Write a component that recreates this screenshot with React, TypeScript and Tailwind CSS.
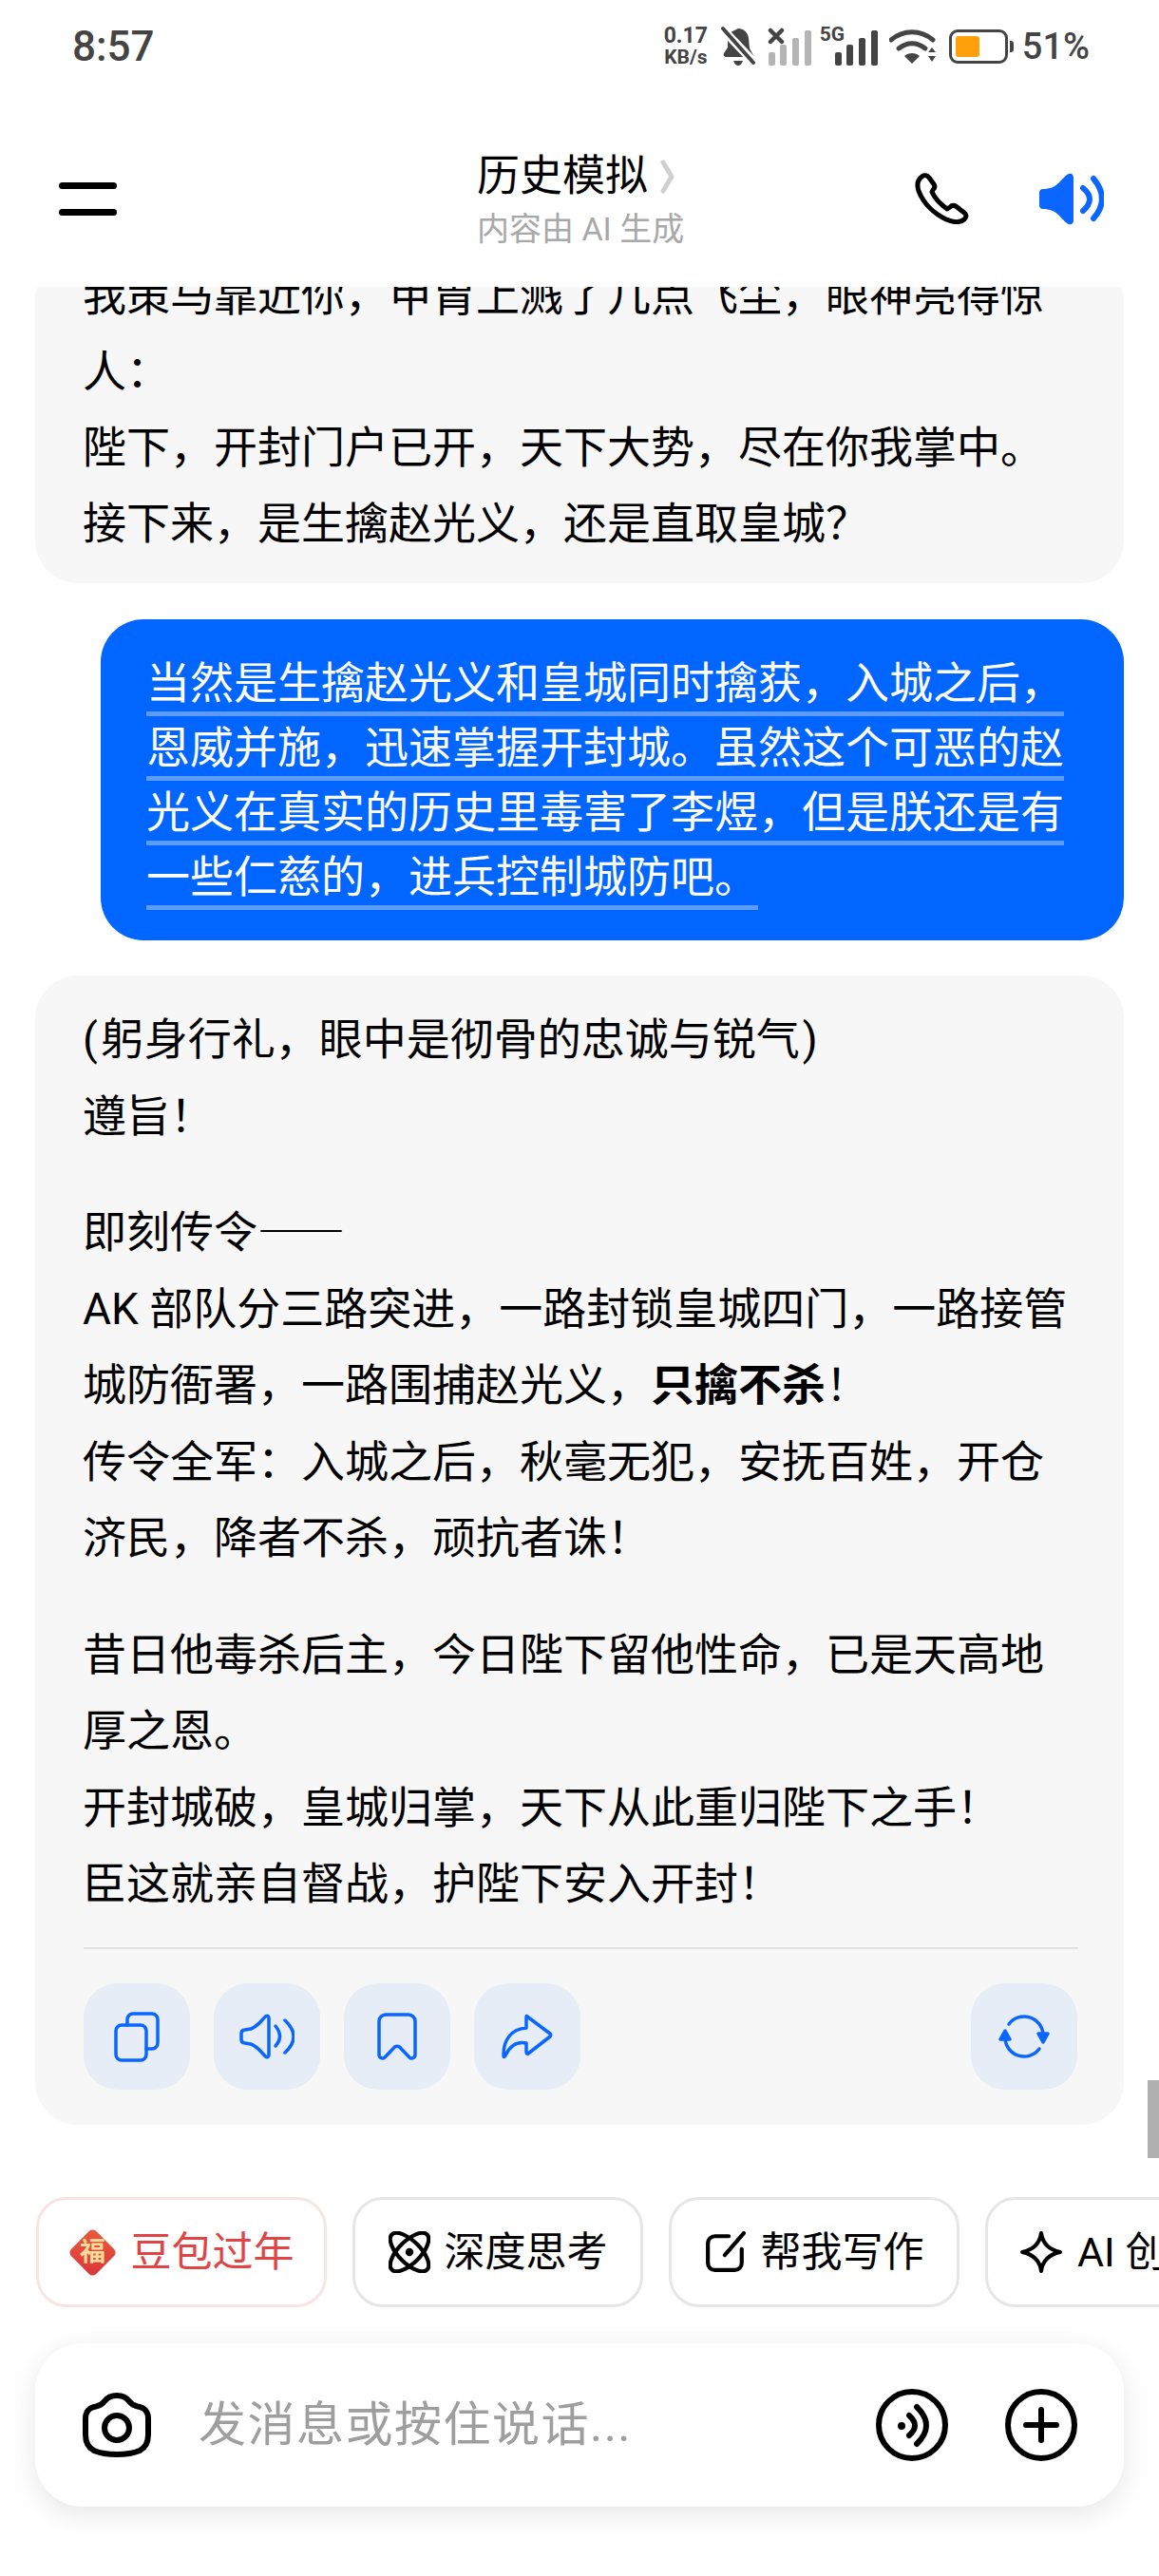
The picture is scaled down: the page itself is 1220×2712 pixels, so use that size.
import type { ReactNode } from 'react';

const answer = [
  ['@paren躬身行礼，眼中是彻骨的忠诚与锐气', '遵旨！'],
  ['即刻传令@dash', 'AK 部队分三路突进，一路封锁皇城四门，一路接管城防衙署，一路围捕赵光义，@bold', '传令全军：入城之后，秋毫无犯，安抚百姓，开仓济民，降者不杀，顽抗者诛！'],
  ['昔日他毒杀后主，今日陛下留他性命，已是天高地厚之恩。', '开封城破，皇城归掌，天下从此重归陛下之手！', '臣这就亲自督战，护陛下安入开封！'],
];

function Line({ text }: { text: string }) {
  if (text.startsWith('@paren')) {
    return (
      <p>
        <span className="mr-[3px]">(</span>
        {text.replace('@paren', '')}
        <span className="ml-[3px]">)</span>
      </p>
    );
  }
  if (text.endsWith('@bold')) {
    return (
      <p>
        {text.replace('@bold', '')}
        <b className="font-bold">只擒不杀</b>！
      </p>
    );
  }
  if (text.endsWith('@dash')) {
    return (
      <p>
        {text.replace('@dash', '')}
        <span lang="zh-CN" className="leading-none [font-family:'Noto_Sans_CJK_SC',sans-serif]">——</span>
      </p>
    );
  }
  return <p>{text}</p>;
}

function StatusBar() {
  return (
    <div className="flex h-[96px] shrink-0 items-center justify-between pl-[76px] pr-[73px] pt-[2px] text-[#444444]">
      <span className="text-[44px] font-medium leading-none">8:57</span>
      <div className="flex items-center">
        <div className="flex w-[48px] flex-col items-center font-bold">
          <span className="text-[23px] leading-[22px]">0.17</span>
          <span className="text-[21px] leading-[22px]">KB/s</span>
        </div>
        <svg className="ml-[12px]" width="38" height="44" viewBox="0 0 38 44" fill="#444444">
          <path d="M19 3c6 0 10 4 11 10l1 11 5 9H7c-3 0-4-2-3-4l4-6V14c0-3 1-5 3-7z" />
          <path d="M14 37h10c-1 3-3 5-5 5s-4-2-5-5z" />
          <path d="M2 3l34 36" stroke="#ffffff" strokeWidth="9" />
          <path d="M3 3l32 36" stroke="#444444" strokeWidth="4" strokeLinecap="round" />
        </svg>
        <svg className="ml-[12px]" width="47" height="40" viewBox="0 0 47 40">
          <path d="M3 3l12 12M15 3L3 15" stroke="#444444" strokeWidth="4.500" strokeLinecap="round" />
          <rect x="1" y="26" width="7" height="14" rx="2" fill="#b5b5b5" />
          <rect x="13" y="18" width="7" height="22" rx="2" fill="#b5b5b5" />
          <rect x="26" y="11" width="7" height="29" rx="2" fill="#b5b5b5" />
          <rect x="39" y="3" width="7" height="37" rx="2" fill="#b5b5b5" />
        </svg>
        <div className="relative ml-[8px] h-[40px] w-[62px]">
          <span className="absolute left-0 top-[-4px] text-[21px] font-bold leading-[22px]">5G</span>
          <svg className="absolute left-0 top-0" width="62" height="40" viewBox="0 0 62 40" fill="#444444">
            <rect x="16" y="26" width="7" height="14" rx="2" />
            <rect x="28" y="18" width="7" height="22" rx="2" />
            <rect x="41" y="11" width="7" height="29" rx="2" />
            <rect x="54" y="3" width="7" height="37" rx="2" />
          </svg>
        </div>
        <svg className="ml-[11px]" width="50" height="38" viewBox="0 0 50 38" fill="none">
          <path d="M2 12c13-11 31-11 44 0" stroke="#444444" strokeWidth="5" strokeLinecap="round" />
          <path d="M10 21c9-7 19-7 28 0" stroke="#444444" strokeWidth="5" strokeLinecap="round" />
          <path d="M16 29c4-4 12-4 16 0l-8 8z" fill="#444444" />
          <path d="M41 25l4-5 4 5zM41 29l4 6 4-6z" fill="#444444" />
        </svg>
        <div className="relative ml-[13px] h-[36px] w-[62px] rounded-[9px] border-[3px] border-[#444444]">
          <div className="absolute left-[4px] top-[4px] h-[22px] w-[25px] rounded-[3px] bg-[#ff9f0a]" />
          <div className="absolute right-[-9px] top-[9px] h-[12px] w-[4px] rounded-r-[3px] bg-[#444444]" />
        </div>
        <span className="ml-[15px] text-[38px] font-medium leading-none">51%</span>
      </div>
    </div>
  );
}

function Header() {
  return (
    <div className="flex h-[206px] shrink-0 items-start pl-[62px] pr-[58px]">
      <div className="mt-[96px] flex w-[61px] flex-col gap-[21px]">
        <div className="h-[7px] rounded-full bg-black" />
        <div className="h-[7px] rounded-full bg-black" />
      </div>
      <div className="ml-[379px] flex flex-col pt-[65px]">
        <div className="flex items-center text-[45px] leading-[50px] text-black">
          历史模拟
          <svg className="ml-[13px]" width="16" height="36" viewBox="0 0 16 36" fill="none">
            <path d="M3 3l9 15-9 15" stroke="#cfcfcf" strokeWidth="5" strokeLinecap="round" strokeLinejoin="round" />
          </svg>
        </div>
        <div className="mt-[10px] text-[34px] leading-[40px] text-[#a8a8a8]">内容由 AI 生成</div>
      </div>
      <svg className="ml-auto mt-[86px]" width="57" height="54" viewBox="0 0 57 54" fill="none">
        <path
          d="M8 3.500C10 2 13 2.500 15 5l5 7c1.500 2 1 4-1 6l-1 2c3 7 9 13 16 18l3-2c2-2 4-2 6-1l9 7c3 2 2 5 0 7-5 4-12 3-19 0C20 43 9 32 4 19 2 13 3 7 8 3.500z"
          stroke="#000000"
          strokeWidth="5"
          strokeLinejoin="round"
        />
      </svg>
      <svg className="ml-[74px] mt-[86px]" width="68" height="55" viewBox="0 0 68 55" fill="none">
        <path
          d="M31 1c3-1 5 1 5 4v45c0 3-2 5-5 4-3-1-6-5-10-9-5-5-10-7-17-7-3 0-4-2-4-4V21c0-2 1-4 4-4 7 0 12-2 17-7 4-4 7-8 10-9z"
          fill="#0a66ff"
        />
        <path d="M46 16Q60 27.500 46 40" stroke="#0a66ff" strokeWidth="6" strokeLinecap="round" />
        <path d="M57 6Q75 27.500 57 48" stroke="#0a66ff" strokeWidth="6" strokeLinecap="round" />
      </svg>
    </div>
  );
}

function ActionButton({ children, className }: { children: ReactNode; className?: string }) {
  return (
    <div className={`flex h-[112px] w-[112px] items-center justify-center rounded-[36px] bg-[#e6edf7] ${className ?? ''}`}>
      {children}
    </div>
  );
}

function Actions() {
  const line = { stroke: '#0a66ff', strokeWidth: 3.500, strokeLinecap: 'round', strokeLinejoin: 'round' } as const;
  return (
    <div className="mt-[36px] flex gap-[25px]">
      <ActionButton>
        <svg width="48" height="53" viewBox="0 0 48 53" fill="none">
          <rect x="2" y="14" width="32" height="37" rx="6" {...line} />
          <path d="M14 14V8a6 6 0 0 1 6-6h20a6 6 0 0 1 6 6v25a6 6 0 0 1-6 6h-6" {...line} />
        </svg>
      </ActionButton>
      <ActionButton>
        <svg width="58" height="48" viewBox="0 0 58 48" fill="none">
          <path d="M28 2.500c2-1 3 .5 3 2.500v38c0 2-1 3.500-3 2.500-4-3.500-8-10.500-16-13.500l-6-1c-3 0-4-2-4-4v-6c0-2 1-4 4-4l6-1c8-3 12-10 16-13.500z" {...line} />
          <path d="M38 13Q47 24 38 34" {...line} />
          <path d="M48 7Q66 24 48 41" {...line} />
        </svg>
      </ActionButton>
      <ActionButton>
        <svg width="42" height="50" viewBox="0 0 42 50" fill="none">
          <path d="M2 9a7 7 0 0 1 7-7h24a7 7 0 0 1 7 7v35c0 4-4 5-6 3L23.500 36c-1.500-1-3.500-1-5 0L8 47c-2 2-6 1-6-3z" {...line} />
        </svg>
      </ActionButton>
      <ActionButton>
        <svg width="54" height="48" viewBox="0 0 54 48" fill="none">
          <path d="M27 3l24 18c1 1 1 2 0 3L28 42c-1 1-2 0-2-2v-9c-10-2-17 2-22 13-2 3-2 1-2-1 0-15 8-27 24-28V5c0-2 0-3 1-2z" {...line} />
        </svg>
      </ActionButton>
      <ActionButton className="ml-auto">
        <svg width="57" height="48" viewBox="0 0 57 48" fill="none">
          <path d="M12 11A20 20 0 0 1 48 22" {...line} />
          <path d="M43 21h10l-5 9z" fill="#0a66ff" {...line} />
          <path d="M44 37A20 20 0 0 1 8 26" {...line} />
          <path d="M3 27h10l-5-9z" fill="#0a66ff" {...line} />
        </svg>
      </ActionButton>
    </div>
  );
}

function Chat() {
  return (
    <div className="relative h-[1988px] shrink-0 overflow-hidden">
      <div className="-mt-[31px] flex flex-col px-[37px]">
        <div className="rounded-[45px] bg-[#f7f7f7] pb-[23px] pl-[50px] pr-[50px] text-[46px] leading-[80px] text-black">
          <p>我策马靠近你，甲胄上溅了几点飞尘，眼神亮得惊人：</p>
          <p>陛下，开封门户已开，天下大势，尽在你我掌中。</p>
          <p>接下来，是生擒赵光义，还是直取皇城？</p>
        </div>
        <div className="ml-[69px] mt-[38px] rounded-[45px] bg-[#0066ff] py-[33px] pl-[48px] pr-[49px] text-[46px] leading-[68px] text-white">
          <span className="underline decoration-[#5c9bff] decoration-[5px] underline-offset-[14px] [text-decoration-skip-ink:none]">
            当然是生擒赵光义和皇城同时擒获，入城之后，恩威并施，迅速掌握开封城。虽然这个可恶的赵光义在真实的历史里毒害了李煜，但是朕还是有一些仁慈的，进兵控制城防吧。
          </span>
        </div>
        <div className="mt-[37px] rounded-[45px] bg-[#f7f7f7] pb-[37px] pl-[50px] pr-[49px] pt-[27px] text-[46px] leading-[80.500px] text-black">
          <div className="flex flex-col gap-[42px]">
            {answer.map((para, i) => (
              <div key={i}>
                {para.map((t) => (
                  <Line key={t} text={t} />
                ))}
              </div>
            ))}
          </div>
          <div className="-mr-[1px] ml-[1px] mt-[26.500px] h-[2px] bg-[#e2e2e2]" />
          <div className="ml-[1px]">
            <Actions />
          </div>
        </div>
      </div>
      <div className="absolute right-0 top-[1888px] h-[82px] w-[12px] bg-[#b0b0b0]" />
    </div>
  );
}

function Chip({ children, red, last }: { children: ReactNode; red?: boolean; last?: boolean }) {
  return (
    <div
      className={`flex h-[116px] shrink-0 items-center justify-center gap-[15px] rounded-[32px] border-[3px] text-[43px] ${
        red ? 'border-[#f9e4e4] text-[#e04444]' : 'border-[#e6e6e6] text-black'
      } ${last ? 'px-[33px]' : 'w-[306px]'}`}
    >
      {children}
    </div>
  );
}

function ChipRow() {
  const line = { stroke: '#000000', strokeWidth: 4, strokeLinecap: 'round', strokeLinejoin: 'round' } as const;
  return (
    <div className="mt-[23px] flex gap-[27px] overflow-hidden pl-[38px]">
      <Chip red>
        <div className="flex h-[50px] w-[50px] items-center justify-center">
          <div className="flex h-[37px] w-[37px] rotate-45 items-center justify-center rounded-[5px] bg-gradient-to-br from-[#ea5a3c] to-[#d9343a]">
            <span className="-rotate-45 text-[27px] font-bold leading-none text-[#fadb9a]">福</span>
          </div>
        </div>
        <span>豆包过年</span>
      </Chip>
      <Chip>
        <svg width="44" height="44" viewBox="0 0 42 42" fill="none">
          <ellipse cx="21" cy="21" rx="25" ry="11" transform="rotate(45 21 21)" {...line} />
          <ellipse cx="21" cy="21" rx="25" ry="11" transform="rotate(-45 21 21)" {...line} />
          <circle cx="21" cy="21" r="4" fill="#000000" />
        </svg>
        <span>深度思考</span>
      </Chip>
      <Chip>
        <svg width="44" height="44" viewBox="0 0 42 42" fill="none">
          <path d="M24 5H10a7 7 0 0 0-7 7v20a7 7 0 0 0 7 7h20a7 7 0 0 0 7-7V18" {...line} />
          <path d="M20 24L39 2" {...line} />
        </svg>
        <span>帮我写作</span>
      </Chip>
      <Chip last>
        <svg width="46" height="46" viewBox="0 0 45 45" fill="none">
          <path d="M22.500 3c1.500 11 7.500 17 19.500 19.500C30 25 24 31 22.500 42 21 31 15 25 3 22.500 15 20 21 14 22.500 3z" {...line} />
        </svg>
        <span>AI 创作</span>
      </Chip>
    </div>
  );
}

function InputBar() {
  return (
    <div className="mx-[37px] mt-[38px] flex h-[172px] items-center rounded-[50px] bg-white pl-[50px] pr-[49px] shadow-[0_8px_30px_rgba(0,0,0,0.1)]">
      <svg width="72" height="68" viewBox="0 0 72 68" fill="none">
        <path
          d="M36 3c6 0 10 2 13 6 3 4 6 5 9 5.500 7 1 11 5.500 11 12.500v17c0 8-3 14-9 17-7 3-15 4-24 4s-17-1-24-4c-6-3-9-9-9-17V27c0-7 4-11.500 11-12.500 3-.5 6-1.500 9-5.500 3-4 7-6 13-6z"
          stroke="#000000"
          strokeWidth="6"
        />
        <circle cx="36" cy="37" r="13" stroke="#000000" strokeWidth="6" />
      </svg>
      <span className="ml-[50px] text-[50px] tracking-[1.500px] text-[#9e9e9e]">发消息或按住说话...</span>
      <svg className="ml-auto" width="76" height="76" viewBox="0 0 76 76" fill="none">
        <circle cx="38" cy="38" r="35" stroke="#000000" strokeWidth="6" />
        <circle cx="27" cy="39" r="4" fill="#000000" />
        <path d="M35 28Q47 38.500 35 49" stroke="#000000" strokeWidth="6" strokeLinecap="round" />
        <path d="M43 19Q63 38.500 43 58" stroke="#000000" strokeWidth="6" strokeLinecap="round" />
      </svg>
      <svg className="ml-[60px]" width="76" height="76" viewBox="0 0 76 76" fill="none">
        <circle cx="38" cy="38" r="35" stroke="#000000" strokeWidth="6" />
        <path d="M22 38h32M38 22v32" stroke="#000000" strokeWidth="6" strokeLinecap="round" />
      </svg>
    </div>
  );
}

export default function App() {
  return (
    <div className="flex h-[2712px] w-[1220px] flex-col overflow-hidden bg-white [font-family:Roboto,'Noto_Sans_CJK_SC',sans-serif]">
      <StatusBar />
      <Header />
      <Chat />
      <ChipRow />
      <InputBar />
    </div>
  );
}
